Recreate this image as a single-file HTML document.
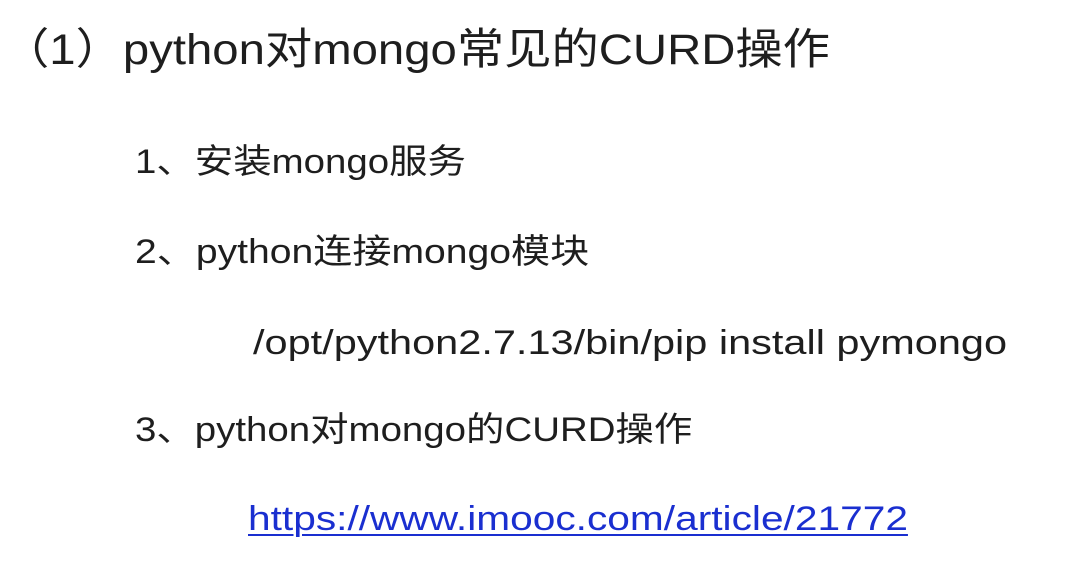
<!DOCTYPE html>
<html><head><meta charset="utf-8"><style>
html,body{margin:0;padding:0;background:#fff;width:1089px;height:561px;overflow:hidden}
div{position:absolute;white-space:nowrap;line-height:1;color:#1e1e1e;font-family:"Liberation Sans","Noto Sans CJK SC",sans-serif;transform-origin:0 50%}
.t{font-size:43px;left:2px;top:29px;transform:scaleX(1.1)}
.i{font-size:34px}
a{color:#1a2fd0;text-decoration:underline;text-decoration-thickness:2px;text-underline-offset:4px}
</style></head><body>
<div class="t">（1）python对mongo常见的CURD操作</div>
<div class="i" style="left:135px;top:145px;transform:scaleX(1.13)">1、安装mongo服务</div>
<div class="i" style="left:135px;top:235px;transform:scaleX(1.15)">2、python连接mongo模块</div>
<div class="i" style="left:253px;top:326px;transform:scaleX(1.22)">/opt/python2.7.13/bin/pip install pymongo</div>
<div class="i" style="left:135px;top:413px;transform:scaleX(1.13)">3、python对mongo的CURD操作</div>
<div class="i" style="left:248px;top:502px;transform:scaleX(1.196)"><a>https://www.imooc.com/article/21772</a></div>
</body></html>
